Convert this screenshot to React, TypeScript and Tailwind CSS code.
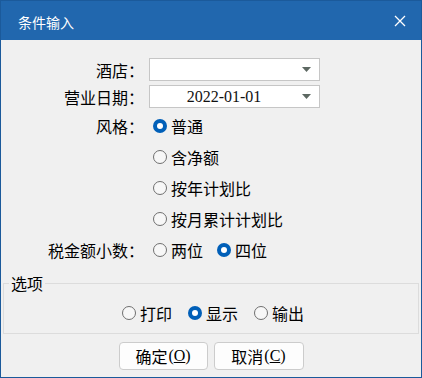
import React from 'react';

const Radio = ({ checked, label }: { checked?: boolean; label: string }) => (
  <label className="flex items-center gap-[4px]">
    {checked ? (
      <span className="shrink-0 w-[14px] h-[14px] rounded-full bg-[#005fb8] flex items-center justify-center">
        <span className="w-[6px] h-[6px] rounded-full bg-white" />
      </span>
    ) : (
      <span className="shrink-0 w-[14px] h-[14px] rounded-full border border-[#6f6f6f] bg-[#f7f7f7]" />
    )}
    <span className="leading-[20px]">{label}</span>
  </label>
);

const Combo = ({ value }: { value?: string }) => (
  <div className="w-[171px] h-[23px] border border-[#c6c6c6] bg-white flex items-center">
    <span className="flex-1 text-center pr-[4px] font-['Liberation_Serif',serif] text-[16px] leading-[20px] text-[#111]">
      {value}
    </span>
    <svg width="9" height="5" viewBox="0 0 9 5" className="mr-[8px] shrink-0">
      <path d="M0 0 H9 L4.5 5 Z" fill="#5d6862" />
    </svg>
  </div>
);

const Row = ({ label, children }: { label?: string; children: React.ReactNode }) => (
  <div className="flex items-center h-[31px]">
    <div className="w-[143px] text-right leading-[20px]">{label}</div>
    <div className="ml-[9px] flex items-center">{children}</div>
  </div>
);

export default function App() {
  return (
    <div className="w-[422px] h-[378px] border border-[#1b5a9b] bg-[#f0f0f0] flex flex-col text-[16px] text-black font-['Noto_Sans_CJK_SC',sans-serif]">
      {/* 标题栏 */}
      <div className="h-[39px] bg-[#2167ae] flex items-center justify-between pl-[17px] pr-[15px] text-white">
        <span className="text-[14px] leading-[20px] mt-[2px]">条件输入</span>
        <svg width="12" height="12" viewBox="0 0 12 12">
          <path d="M1 1 L11 11 M11 1 L1 11" stroke="white" strokeWidth="1.3" />
        </svg>
      </div>

      {/* 表单 */}
      <div className="pt-[18px] flex flex-col">
        <div className="flex items-center h-[23px]">
          <div className="w-[143px] text-right leading-[20px]">酒店：</div>
          <div className="ml-[5px]">
            <Combo />
          </div>
        </div>
        <div className="flex items-center h-[23px] mt-[4px]">
          <div className="w-[143px] text-right leading-[20px]">营业日期：</div>
          <div className="ml-[5px]">
            <Combo value="2022-01-01" />
          </div>
        </div>

        <div className="mt-[2px]">
          <Row label="风格：">
            <Radio checked label="普通" />
          </Row>
          <Row>
            <Radio label="含净额" />
          </Row>
          <Row>
            <Radio label="按年计划比" />
          </Row>
          <Row>
            <Radio label="按月累计计划比" />
          </Row>
          <Row label="税金额小数：">
            <div className="flex items-center gap-[14px]">
              <Radio label="两位" />
              <Radio checked label="四位" />
            </div>
          </Row>
        </div>

        {/* 选项 */}
        <fieldset className="mx-[2px] mt-[9px] border border-[#dcdcdc] pb-[10px]">
          <legend className="ml-[5px] px-[2px] leading-[19px]">选项</legend>
          <div className="flex justify-center items-center gap-[16px] h-[20px] mt-[10px] pl-[4px]">
            <Radio label="打印" />
            <Radio checked label="显示" />
            <Radio label="输出" />
          </div>
        </fieldset>

        {/* 按钮 */}
        <div className="flex justify-center gap-[6px] mt-[8px]">
          <button className="w-[89px] h-[28px] rounded-[4px] border border-[#cccccc] bg-[#fdfdfd] flex items-center justify-center leading-[20px]">
            确定<span className="font-['Liberation_Serif',serif] ml-[1px]">(<span className="underline">O</span>)</span>
          </button>
          <button className="w-[90px] h-[28px] rounded-[4px] border border-[#cccccc] bg-[#fdfdfd] flex items-center justify-center leading-[20px]">
            取消<span className="font-['Liberation_Serif',serif] ml-[1px]">(<span className="underline">C</span>)</span>
          </button>
        </div>
      </div>
    </div>
  );
}
